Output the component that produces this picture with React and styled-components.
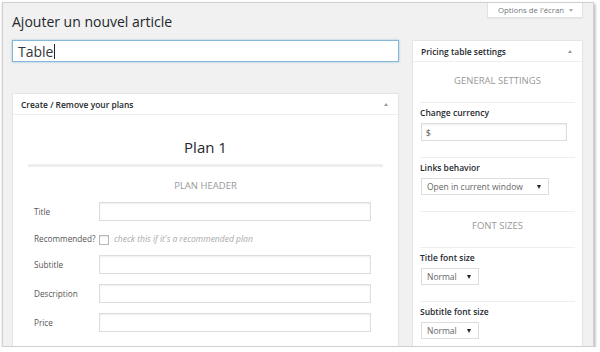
import styled, { createGlobalStyle } from "styled-components";

const GlobalStyle = createGlobalStyle`
  html, body {
    margin: 0;
    padding: 0;
    background: #fff;
  }
  body {
    font-family: "Open Sans", "Noto Sans", sans-serif;
  }
  * {
    box-sizing: border-box;
  }
`;

const Frame = styled.div`
  margin: 2px 0 0 2px;
  width: 592px;
  height: 345px;
  border: 1px solid #cfcfcf;
  background: #f1f1f1;
  box-shadow: 1px 2px 3px rgba(0, 0, 0, 0.35);
  overflow: hidden;
`;

const Page = styled.div`
  padding: 0 10px 0 9px;
`;

const TopRow = styled.div`
  display: flex;
  justify-content: space-between;
  align-items: flex-start;
`;

const Heading = styled.h1`
  margin: 0;
  padding-top: 9px;
  font-size: 14px;
  line-height: 20px;
  font-weight: 400;
  color: #23282d;
`;

const ScreenTab = styled.div`
  width: 96px;
  height: 15px;
  display: flex;
  align-items: center;
  gap: 5px;
  padding-left: 10px;
  background: #fff;
  border: 1px solid #e1e1e1;
  border-top: none;
  font-size: 7.8px;
  color: #72777c;
  box-shadow: 0 1px 1px rgba(0, 0, 0, 0.04);
`;

const TabArrow = styled.span`
  width: 0;
  height: 0;
  border-left: 2.5px solid transparent;
  border-right: 2.5px solid transparent;
  border-top: 3px solid #aaa;
`;

const Columns = styled.div`
  display: flex;
  align-items: flex-start;
  gap: 13px;
  margin-top: 8px;
`;

const MainCol = styled.div`
  width: 387px;
`;

const SideCol = styled.div`
  width: 171px;
`;

const TitleField = styled.div`
  height: 22px;
  display: flex;
  align-items: center;
  padding-left: 5px;
  background: #fff;
  border: 1px solid #86b7da;
  box-shadow: 0 0 2px rgba(30, 140, 190, 0.45);
  font-size: 14px;
  color: #32373c;
`;

const Caret = styled.span`
  display: inline-block;
  width: 1px;
  height: 15px;
  margin-left: 1px;
  background: #222;
`;

const Box = styled.section`
  margin-top: ${(p) => p.$offset || 0}px;
  background: #fff;
  border: 1px solid #e5e5e5;
  box-shadow: 0 1px 1px rgba(0, 0, 0, 0.04);
`;

const BoxHeader = styled.div`
  height: 21px;
  display: flex;
  align-items: center;
  justify-content: space-between;
  padding: 0 10px 0 8px;
  border-bottom: 1px solid #eee;
  font-size: 8.45px;
  font-weight: 600;
  color: #23282d;
`;

const Toggle = styled.span`
  width: 0;
  height: 0;
  border-left: 2.5px solid transparent;
  border-right: 2.5px solid transparent;
  border-bottom: 3px solid #999;
`;

const PlanBody = styled.div`
  padding: 0 15px 20px;
`;

const PlanTitle = styled.h2`
  margin: 0;
  padding-top: 22px;
  font-size: 15px;
  line-height: 20px;
  font-weight: 400;
  text-align: center;
  color: #23282d;
`;

const ThickRule = styled.hr`
  margin: 7px 0 0;
  border: 0;
  height: 3px;
  background: #eee;
`;

const SectionTitle = styled.div`
  padding: ${(p) => p.$pad};
  font-size: 9.5px;
  line-height: 14px;
  text-align: center;
  text-transform: uppercase;
  color: #999;
`;

const FieldList = styled.div`
  display: flex;
  flex-direction: column;
  gap: 10px;
`;

const FieldRow = styled.div`
  display: grid;
  grid-template-columns: 65px 272px;
  align-items: ${(p) => (p.$bottom ? "end" : "center")};
  height: ${(p) => (p.$bottom ? "14px" : "auto")};
  padding-left: 6px;
`;

const FieldLabel = styled.span`
  font-size: 8.2px;
  line-height: 12px;
  color: #555;
`;

const TextBox = styled.div`
  height: 19px;
  background: #fff;
  border: 1px solid #ddd;
  box-shadow: inset 0 1px 2px rgba(0, 0, 0, 0.07);
`;

const CheckLine = styled.div`
  display: flex;
  align-items: flex-end;
  gap: 5px;
`;

const CheckBox = styled.span`
  width: 10px;
  height: 10px;
  background: #fff;
  border: 1px solid #b4b9be;
  box-shadow: inset 0 1px 2px rgba(0, 0, 0, 0.1);
`;

const Hint = styled.span`
  font-size: 8.5px;
  line-height: 12px;
  font-style: italic;
  color: #aaa;
`;

const SideBody = styled.div`
  padding: 5px 7px 0;
`;

const ThinRule = styled.hr`
  margin: 0;
  border: 0;
  height: 1px;
  background: #eee;
`;

const Setting = styled.div`
  padding: 4px 0 16px;
`;

const SettingLabel = styled.div`
  margin-bottom: 4px;
  font-size: 8.5px;
  font-weight: 600;
  line-height: 12px;
  color: #23282d;
`;

const SideInput = styled.div`
  width: 146px;
  height: 18px;
  margin-left: 1px;
  display: flex;
  align-items: center;
  padding-left: 4px;
  background: #fff;
  border: 1px solid #ddd;
  box-shadow: inset 0 1px 2px rgba(0, 0, 0, 0.07);
  font-size: 8.5px;
  color: #555;
`;

const Select = styled.div`
  width: ${(p) => p.$width}px;
  height: 17px;
  margin-left: 1px;
  display: flex;
  align-items: center;
  justify-content: space-between;
  padding: 0 7px 0 5px;
  background: #fff;
  border: 1px solid #ddd;
  font-size: 8.5px;
  color: #666;
`;

const SelectArrow = styled.span`
  width: 0;
  height: 0;
  border-left: 2.5px solid transparent;
  border-right: 2.5px solid transparent;
  border-top: 4px solid #222;
`;

const planFields = ["Title", "Recommended?", "Subtitle", "Description", "Price"];

function PlanField({ label }) {
  const isCheck = label === "Recommended?";
  return (
    <FieldRow $bottom={isCheck}>
      <FieldLabel>{label}</FieldLabel>
      {isCheck ? (
        <CheckLine>
          <CheckBox />
          <Hint>check this if it's a recommended plan</Hint>
        </CheckLine>
      ) : (
        <TextBox />
      )}
    </FieldRow>
  );
}

function SelectSetting({ label, value, width }) {
  return (
    <Setting>
      <SettingLabel>{label}</SettingLabel>
      <Select $width={width}>
        {value}
        <SelectArrow />
      </Select>
    </Setting>
  );
}

export default function App() {
  return (
    <>
      <GlobalStyle />
      <Frame>
        <Page>
          <TopRow>
            <Heading>Ajouter un nouvel article</Heading>
            <ScreenTab>
              Options de l'écran
              <TabArrow />
            </ScreenTab>
          </TopRow>

          <Columns>
            <MainCol>
              <TitleField>
                Table
                <Caret />
              </TitleField>

              <Box $offset={31}>
                <BoxHeader>
                  Create / Remove your plans
                  <Toggle />
                </BoxHeader>
                <PlanBody>
                  <PlanTitle>Plan 1</PlanTitle>
                  <ThickRule />
                  <SectionTitle $pad="12px 0 9px">Plan header</SectionTitle>
                  <FieldList>
                    {planFields.map((f) => (
                      <PlanField key={f} label={f} />
                    ))}
                  </FieldList>
                </PlanBody>
              </Box>
            </MainCol>

            <SideCol>
              <Box>
                <BoxHeader>
                  Pricing table settings
                  <Toggle />
                </BoxHeader>
                <SideBody>
                  <SectionTitle $pad="7px 0 14px">General settings</SectionTitle>
                  <ThinRule />
                  <Setting>
                    <SettingLabel>Change currency</SettingLabel>
                    <SideInput>$</SideInput>
                  </Setting>
                  <ThinRule />
                  <SelectSetting
                    label="Links behavior"
                    value="Open in current window"
                    width={128}
                  />
                  <ThinRule />
                  <SectionTitle $pad="7px 0 14px">Font sizes</SectionTitle>
                  <ThinRule />
                  <SelectSetting label="Title font size" value="Normal" width={58} />
                  <ThinRule />
                  <SelectSetting label="Subtitle font size" value="Normal" width={58} />
                </SideBody>
              </Box>
            </SideCol>
          </Columns>
        </Page>
      </Frame>
    </>
  );
}
